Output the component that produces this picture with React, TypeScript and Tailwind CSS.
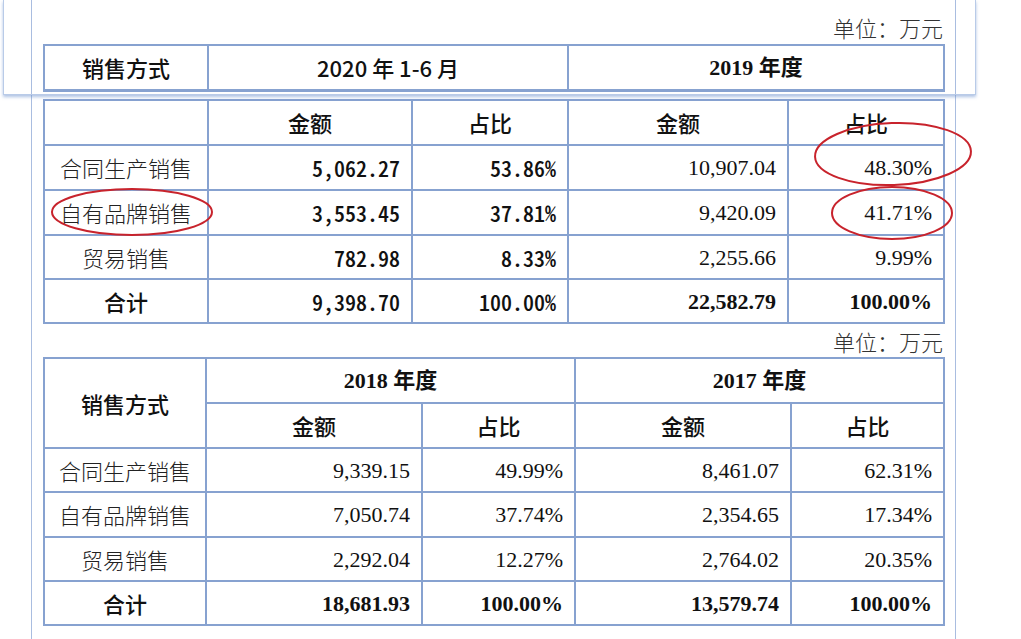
import React from "react";

const B = "border-2 border-[#87a2d0]";
const SANS = "font-['Noto_Sans_CJK_SC',sans-serif]";
const SERIF = "font-['Liberation_Serif','Noto_Sans_CJK_SC',serif]";

const th = `${B} ${SANS} font-medium text-[22px] text-[#111] text-center`;
const label = `${B} ${SANS} font-light text-[22px] text-[#222] text-center`;
const monoNum = `${B} ${SANS} font-medium text-[22px] text-[#111] text-right pr-[11px] [font-feature-settings:'hwid']`;
const serifNum = `${B} ${SERIF} text-[22px] text-[#111] text-right pr-[11px]`;
const serifBold = `${B} ${SERIF} font-bold text-[22px] text-[#111] text-right pr-[11px]`;

function Unit({ className = "" }: { className?: string }) {
  return (
    <div className={`${SANS} font-light text-[22px] leading-[26px] text-[#333] text-right pr-px ${className}`}>
      单位：万元
    </div>
  );
}

function Cols1() {
  return (
    <colgroup>
      <col className="w-[164px]" />
      <col className="w-[204px]" />
      <col className="w-[156px]" />
      <col className="w-[220px]" />
      <col className="w-[156px]" />
    </colgroup>
  );
}

function Cols2() {
  return (
    <colgroup>
      <col className="w-[162px]" />
      <col className="w-[216px]" />
      <col className="w-[153px]" />
      <col className="w-[216px]" />
      <col className="w-[153px]" />
    </colgroup>
  );
}

const rows1 = [
  ["合同生产销售", "5,062.27", "53.86%", "10,907.04", "48.30%"],
  ["自有品牌销售", "3,553.45", "37.81%", "9,420.09", "41.71%"],
  ["贸易销售", "782.98", "8.33%", "2,255.66", "9.99%"],
];
const h1 = ["h-[45px]", "h-[45px]", "h-[44px]"];

const rows2 = [
  ["合同生产销售", "9,339.15", "49.99%", "8,461.07", "62.31%"],
  ["自有品牌销售", "7,050.74", "37.74%", "2,354.65", "17.34%"],
  ["贸易销售", "2,292.04", "12.27%", "2,764.02", "20.35%"],
];
const h2 = ["h-[44px]", "h-[45px]", "h-[44px]"];

export default function App() {
  return (
    <div className="relative w-[1021px] h-[639px] overflow-hidden bg-white flex flex-col">
      {/* floating repeated header */}
      <div className="ml-[3px] w-[973px] h-[95px] shrink-0 border border-t-0 border-[#b9cbe8] bg-white shadow-[0_2px_3px_rgba(110,145,205,0.55)] z-10">
        <div className="ml-[27px] w-[925px] h-full border-x border-[#a9bde0] px-[11px] pt-[14px]">
          <Unit />
          <table className="mt-[4px] w-[900px] table-fixed border-collapse">
            <Cols1 />
            <tbody>
              <tr className="h-[45px]">
                <td className={`${th} border-b-[3px]`}>销售方式</td>
                <td colSpan={2} className={`${th} border-b-[3px]`}>2020 年 1-6 月</td>
                <td colSpan={2} className={`${B} border-b-[3px] ${SERIF} font-bold text-[22px] text-[#111] text-center`}>
                  2019 年度
                </td>
              </tr>
            </tbody>
          </table>
        </div>
      </div>

      {/* page body */}
      <div className="ml-[31px] w-[925px] flex-1 border-x border-[#a9bde0] px-[11px] pt-[4px]">
        <table className="w-[900px] table-fixed border-collapse">
          <Cols1 />
          <tbody>
            <tr className="h-[45px]">
              <td className={B}></td>
              <td className={th}>金额</td>
              <td className={th}>占比</td>
              <td className={th}>金额</td>
              <td className={th}>占比</td>
            </tr>
            {rows1.map((r, i) => (
              <tr key={r[0]} className={h1[i]}>
                <td className={label}>{r[0]}</td>
                <td className={monoNum}>{r[1]}</td>
                <td className={monoNum}>{r[2]}</td>
                <td className={serifNum}>{r[3]}</td>
                <td className={serifNum}>{r[4]}</td>
              </tr>
            ))}
            <tr className="h-[44px]">
              <td className={th}>合计</td>
              <td className={monoNum}>9,398.70</td>
              <td className={monoNum}>100.00%</td>
              <td className={serifBold}>22,582.79</td>
              <td className={serifBold}>100.00%</td>
            </tr>
          </tbody>
        </table>

        <Unit className="mt-[4px]" />

        <table className="mt-[3px] w-[900px] table-fixed border-collapse">
          <Cols2 />
          <tbody>
            <tr className="h-[45px]">
              <td rowSpan={2} className={th}>销售方式</td>
              <td colSpan={2} className={`${B} ${SERIF} font-bold text-[22px] text-[#111] text-center`}>2018 年度</td>
              <td colSpan={2} className={`${B} ${SERIF} font-bold text-[22px] text-[#111] text-center`}>2017 年度</td>
            </tr>
            <tr className="h-[45px]">
              <td className={th}>金额</td>
              <td className={th}>占比</td>
              <td className={th}>金额</td>
              <td className={th}>占比</td>
            </tr>
            {rows2.map((r, i) => (
              <tr key={r[0]} className={h2[i]}>
                <td className={label}>{r[0]}</td>
                <td className={serifNum}>{r[1]}</td>
                <td className={serifNum}>{r[2]}</td>
                <td className={serifNum}>{r[3]}</td>
                <td className={serifNum}>{r[4]}</td>
              </tr>
            ))}
            <tr className="h-[44px]">
              <td className={th}>合计</td>
              <td className={serifBold}>18,681.93</td>
              <td className={serifBold}>100.00%</td>
              <td className={serifBold}>13,579.74</td>
              <td className={serifBold}>100.00%</td>
            </tr>
          </tbody>
        </table>
      </div>

      {/* red annotation ellipses */}
      <svg className="absolute inset-0 pointer-events-none z-20" width="1021" height="639" viewBox="0 0 1021 639">
        <g fill="none" stroke="#c8232c" strokeWidth="2">
          <ellipse cx="893" cy="154" rx="78" ry="31" transform="rotate(-2 893 154)" />
          <ellipse cx="892" cy="213" rx="60" ry="26" />
          <ellipse cx="132" cy="212" rx="80" ry="23" />
        </g>
      </svg>
    </div>
  );
}
